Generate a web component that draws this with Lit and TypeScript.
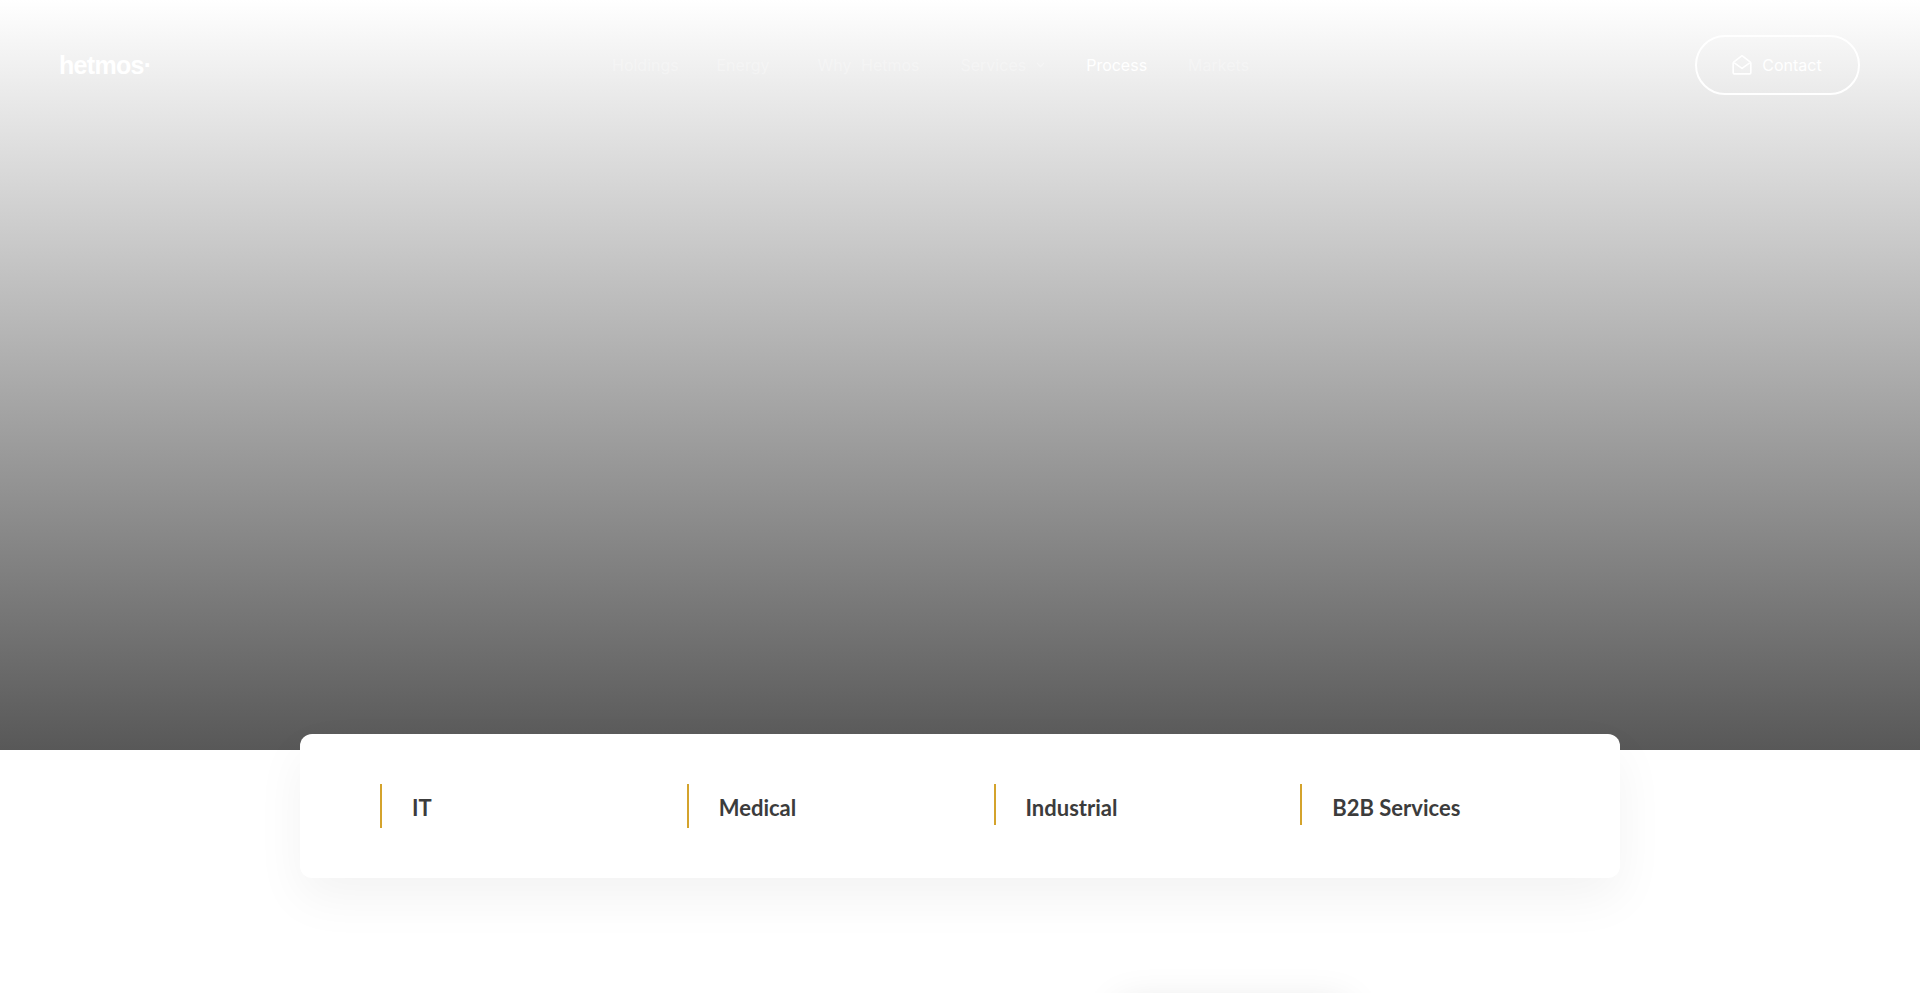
import { LitElement, html, css } from "lit";
import { customElement } from "lit/decorators.js";

@customElement("app-root")
export class AppRoot extends LitElement {
  static styles = css`
    :host {
      display: block;
      height: 100vh;
      overflow: hidden;
      background: #fff;
      font-family: Inter, "Liberation Sans", sans-serif;
    }
    .hero {
      height: 750px;
      background: linear-gradient(180deg, #ffffff 0%, #585858 100%);
    }
    .header {
      display: flex;
      align-items: center;
      justify-content: space-between;
      padding: 35px 60px 0 59px;
      height: 60px;
    }
    .logo {
      width: 553px;
      font: 700 25px/1 "Liberation Sans", sans-serif;
      letter-spacing: -0.7px;
      color: #fff;
    }
    .nav {
      display: flex;
      align-items: center;
      flex: 1;
      gap: 41px;
      font-size: 16px;
      word-spacing: 5px;
      color: rgba(255, 255, 255, 0.3);
    }
    .nav a {
      display: flex;
      align-items: center;
      gap: 10px;
      white-space: nowrap;
    }
    .nav a.first {
      width: 63.5px;
    }
    .nav a.fixed {
      width: 60px;
    }
    .nav a.active {
      color: #fff;
    }
    .nav svg {
      width: 9px;
      height: 6px;
    }
    .contact {
      display: flex;
      align-items: center;
      justify-content: center;
      gap: 9px;
      box-sizing: border-box;
      width: 165px;
      height: 60px;
      padding-right: 2px;
      border: 2px solid #fff;
      border-radius: 30px;
      color: #fff;
      font-size: 16px;
    }
    .contact svg {
      width: 22px;
      height: 22px;
    }
    .sectors {
      box-sizing: border-box;
      width: 1320px;
      height: 144px;
      margin: -16px auto 0;
      position: relative;
      padding: 50px 13px 0 80px;
      display: grid;
      grid-template-columns: repeat(4, 1fr);
      align-items: start;
      background: #fff;
      border-radius: 12px;
      box-shadow: 0 20px 50px rgba(0, 0, 0, 0.05);
    }
    .sector {
      display: flex;
      align-items: flex-start;
      box-sizing: border-box;
      height: 44px;
      padding: 13px 0 0 30px;
      border-left: 2px solid #d4a32c;
      font: 700 22px/1 Lato, sans-serif;
      color: #3c3c3c;
    }
    .sector.short {
      height: 41px;
    }
    .lower {
      display: flex;
      justify-content: flex-end;
      padding: 127px 573px 0 0;
    }
    .lower div {
      width: 228px;
      height: 60px;
      background: #fff;
      box-shadow: 0 0 40px rgba(0, 0, 0, 0.12);
    }
  `;

  render() {
    const chevron = html`<svg viewBox="0 0 9 6" fill="none" stroke="currentColor" stroke-width="1.3"><path d="M1 1l3.5 3.5L8 1" /></svg>`;
    return html`
      <section class="hero">
        <header class="header">
          <div class="logo">hetmos·</div>
          <nav class="nav">
            <a class="first">Holdings</a>
            <a class="fixed">Energy</a>
            <a>Why Hetmos</a>
            <a>Services ${chevron}</a>
            <a class="active">Process</a>
            <a>Markets</a>
          </nav>
          <a class="contact">
            <svg viewBox="0 0 20 20" fill="none" stroke="currentColor" stroke-width="1.5" stroke-linejoin="round">
              <path d="M2 8.5c0-.6.3-1 .7-1.4L10 1.5l7.3 5.6c.4.4.7.8.7 1.4V17c0 .6-.4 1-1 1H3c-.6 0-1-.4-1-1Z" />
              <path d="M3 8l7 5 7-5" />
            </svg>
            Contact
          </a>
        </header>
      </section>
      <section class="sectors">
        <div class="sector">IT</div>
        <div class="sector">Medical</div>
        <div class="sector short">Industrial</div>
        <div class="sector short">B2B Services</div>
      </section>
      <section class="lower"><div></div></section>
    `;
  }
}
